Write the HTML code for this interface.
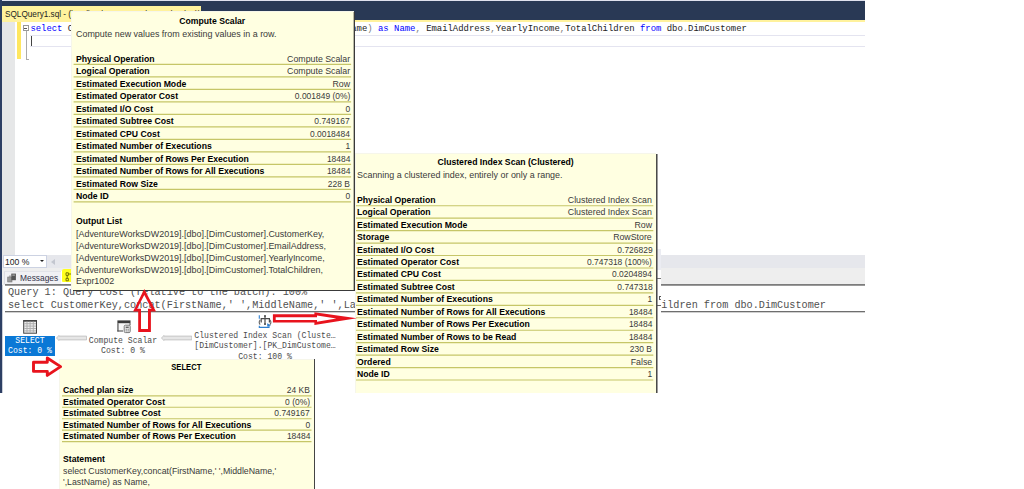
<!DOCTYPE html><html lang="en"><head><meta charset="utf-8"><title>Execution plan</title><style>
html,body{margin:0;padding:0;background:#fff;}
body{width:1024px;height:489px;position:relative;overflow:hidden;font-family:"Liberation Sans",sans-serif;color:#1e1e1e;}
.a{position:absolute;white-space:nowrap;}
.tt{position:absolute;background:#ffffe1;box-shadow:inset 1px 1px 0 #f6f6ea;}
.b{font-weight:bold;color:#000;}
.b{transform:scaleX(0.912);}
.v{transform:scaleX(0.89);color:#3a3a3a;}
.r{transform:scaleX(0.94);}
.r3{transform:scaleX(0.922);}
.ol{transform-origin:0 50%;}
.or{transform-origin:100% 50%;}
.oc{transform-origin:50% 50%;}
.r{color:#3a3a3a;}
.row{position:absolute;white-space:nowrap;line-height:12px;height:12px;}
.sep{position:absolute;height:1.3px;background:#c9c96e;}
.mono{font-family:"Liberation Mono",monospace;}
</style></head><body>
<div class="a" style="left:0;top:0;width:865px;height:20.4px;background:#293955"></div>
<div class="a" style="left:0;top:0;width:865px;height:1px;background:#dfe1ee"></div>
<div class="a" style="left:2px;top:20.4px;width:863px;height:1.6px;background:#fff29d"></div>
<div class="a" style="left:0;top:0;width:2px;height:392.7px;background:#2d3f64"></div>
<div class="a" style="left:2px;top:21px;width:1px;height:371.7px;background:#2d3f64;opacity:0.25"></div>
<div class="a" style="left:2px;top:6px;width:199px;height:15.5px;background:#fff29d"></div>
<div class="a" style="left:5px;top:7.3px;font-size:9.4px;line-height:14px;color:#222;transform:scaleX(0.875);transform-origin:0 0">SQLQuery1.sql - (local).AdventureWorksDW (sa (53))</div>
<div class="a" style="left:2px;top:21.5px;width:13px;height:233px;background:#e6e7e8"></div>
<div class="a" style="left:17px;top:22px;width:3.5px;height:37px;background:#ffe760"></div>
<div class="a mono" style="left:30.4px;top:23.2px;font-size:8.92px;line-height:12px;color:#222"><span style="color:#0000ff">select</span> CustomerKey<span style="color:#808080">,</span><span style="color:#e020e0">concat</span><span style="color:#808080">(</span>FirstName<span style="color:#808080">,</span><span style="color:#e01010">' '</span><span style="color:#808080">,</span>MiddleName<span style="color:#808080">,</span><span style="color:#e01010">' '</span><span style="color:#808080">,</span>LastName<span style="color:#808080">)</span> <span style="color:#0000ff">as</span> <span style="color:#0000ff">Name</span><span style="color:#808080">,</span> EmailAddress<span style="color:#808080">,</span>YearlyIncome<span style="color:#808080">,</span>TotalChildren <span style="color:#0000ff">from</span> dbo<span style="color:#808080">.</span>DimCustomer</div>
<div class="a" style="left:30px;top:34.6px;width:835px;height:12.3px;border-top:1px solid #e4e4f0;border-bottom:1px solid #e4e4f0;box-sizing:border-box"></div>
<div class="a" style="left:30.5px;top:35.5px;width:1.2px;height:10.5px;background:#444"></div>
<div class="a" style="left:22.8px;top:25.2px;width:6px;height:6px;border:1px solid #999;box-sizing:border-box;background:#fff"></div>
<div class="a" style="left:24.3px;top:27.8px;width:3px;height:1px;background:#555"></div>
<div class="a" style="left:25.8px;top:31px;width:1px;height:28px;background:#aaa"></div>
<div class="a" style="left:25.8px;top:58.5px;width:3px;height:1px;background:#aaa"></div>
<div class="a" style="left:2px;top:255px;width:863px;height:13px;background:#e6e7ec"></div>
<div class="a" style="left:2px;top:268px;width:863px;height:16.5px;background:#eeeeee"></div>
<div class="a" style="left:2.5px;top:255.4px;width:44.2px;height:12.2px;background:#fff;border:1px solid #ccd2e2;box-sizing:border-box"></div>
<div class="a" style="left:5px;top:255.8px;font-size:9.6px;line-height:12px;color:#222;transform:scaleX(0.9);transform-origin:0 50%">100 %</div>
<div class="a" style="left:40.3px;top:260.3px;width:0;height:0;border-left:2.2px solid transparent;border-right:2.2px solid transparent;border-top:2.8px solid #222"></div>
<div class="a" style="left:51px;top:258.5px;width:0;height:0;border-top:3px solid transparent;border-bottom:3px solid transparent;border-right:4px solid #c3c6cf"></div>
<div class="a" style="left:4px;top:271.3px;width:56.5px;height:13px;background:#f1f1f4;border-left:1px solid #dcdde3;border-top:1px solid #e2e3e8;box-sizing:border-box"></div>
<div class="a" style="left:60.5px;top:271.3px;width:20px;height:13px;background:#fff"></div>
<div class="a" style="left:20.3px;top:272.3px;font-size:9px;line-height:12px;color:#33334a;transform:scaleX(0.93);transform-origin:0 50%">Messages</div>
<svg class="a" style="left:7px;top:272px" width="10" height="11" viewBox="0 0 10 11"><rect x="0.7" y="5" width="4.3" height="5" fill="#9a9a9a" stroke="#777" stroke-width="0.6"/><rect x="4.3" y="1.6" width="4.6" height="6.6" fill="#555"/><rect x="5.3" y="2.6" width="2.6" height="1" fill="#bbb"/><rect x="2" y="3.6" width="2" height="1.2" fill="#999"/></svg>
<div class="a" style="left:62.2px;top:269px;width:10px;height:13.4px;background:#ffff1e;border-radius:2px 0 0 1px"></div>
<svg class="a" style="left:64px;top:271px" width="9" height="12" viewBox="0 0 9 12"><path d="M2 1.8h2.4v2.6h-2.4zM3.2 4.4v3M2 7.4h2.4v2.4h-2.4zM4.4 3h2.6" fill="none" stroke="#6b6b00" stroke-width="0.9"/></svg>
<div class="a" style="left:5px;top:284px;width:860px;height:1px;background:#7c7c7c"></div>
<div class="a" style="left:5px;top:285px;width:860px;height:1px;background:#9a9a9a"></div>
<div class="a" style="left:5px;top:311px;width:860px;height:1px;background:#6e6e6e"></div>
<div class="a" style="left:5px;top:312px;width:860px;height:1px;background:#d0d0d0"></div>
<div class="a mono" style="left:8px;top:286.8px;font-size:10.18px;line-height:12px;color:#505050">Query 1: Query cost (relative to the batch): 100%</div>
<div class="a mono" style="left:8px;top:300px;font-size:10.18px;line-height:12px;color:#505050">select CustomerKey,concat(FirstName,' ',MiddleName,' ',LastName) as Name, EmailAddress,YearlyIncome,TotalChildren from dbo.DimCustomer</div>
<div class="a" style="left:5px;top:336px;width:50px;height:19.8px;background:#0a78d6"></div>
<div class="a mono" style="left:-70.0px;top:336.0px;width:200px;text-align:center;font-size:8.15px;line-height:10px;color:#fff">SELECT</div>
<div class="a mono" style="left:-70.0px;top:346.0px;width:200px;text-align:center;font-size:8.15px;line-height:10px;color:#fff">Cost: 0 %</div>
<div class="a mono" style="left:23.0px;top:336.0px;width:200px;text-align:center;font-size:8.15px;line-height:10px;color:#4c4c4c">Compute Scalar</div>
<div class="a mono" style="left:23.0px;top:346.0px;width:200px;text-align:center;font-size:8.15px;line-height:10px;color:#4c4c4c">Cost: 0 %</div>
<div class="a mono" style="left:165.0px;top:330.7px;width:200px;text-align:center;font-size:8.15px;line-height:10px;color:#4c4c4c">Clustered Index Scan (Cluste…</div>
<div class="a mono" style="left:165.0px;top:340.7px;width:200px;text-align:center;font-size:8.15px;line-height:10px;color:#4c4c4c">[DimCustomer].[PK_DimCustome…</div>
<div class="a mono" style="left:165.0px;top:351.6px;width:200px;text-align:center;font-size:8.15px;line-height:10px;color:#4c4c4c">Cost: 100 %</div>
<svg class="a" style="left:55.8px;top:333.7px" width="31.0" height="8" viewBox="0 0 31.0 8"><path d="M0.4 4 L3 1.5 L3 2.1 L30.5 2.1 L30.5 5.9 L3 5.9 L3 6.5 Z" fill="#e6e6e6" stroke="#bdbdbd" stroke-width="0.8" stroke-linejoin="round"/></svg>
<svg class="a" style="left:161.2px;top:333.7px" width="31.3" height="8" viewBox="0 0 31.3 8"><path d="M0.4 4 L3 1.5 L3 2.1 L30.8 2.1 L30.8 5.9 L3 5.9 L3 6.5 Z" fill="#e6e6e6" stroke="#bdbdbd" stroke-width="0.8" stroke-linejoin="round"/></svg>
<svg class="a" style="left:23px;top:319.5px" width="14" height="14" viewBox="0 0 14 14"><rect x="0.7" y="0.7" width="12.8" height="12.5" fill="#ececec" stroke="#444" stroke-width="1"/><rect x="0.2" y="0.2" width="13.8" height="1.4" fill="#3c3c3c"/><path d="M4 1.6v11M7.1 1.6v11M10.3 1.6v11M1.2 3.7h11.8M1.2 6.1h11.8M1.2 8.5h11.8M1.2 10.9h11.8" stroke="#aaa" stroke-width="0.9" fill="none"/></svg>
<svg class="a" style="left:116.5px;top:319.5px" width="14" height="14" viewBox="0 0 14 14"><rect x="0.4" y="0.4" width="13.1" height="11" fill="#f6f6f6"/><rect x="0.4" y="0.4" width="13.1" height="2.8" fill="#3a3a3a"/><rect x="0.4" y="3.2" width="1.1" height="8.3" fill="#444"/><rect x="0.4" y="10.5" width="5.6" height="1" fill="#444"/><rect x="12.5" y="3.2" width="1" height="2" fill="#444"/><rect x="7.2" y="5.2" width="6" height="7.4" rx="1.2" fill="#e4e4e4" stroke="#7a7a7a" stroke-width="1"/><rect x="8.7" y="6.6" width="3" height="1.4" fill="#666"/><path d="M8.7 9.3h1.2M10.6 9.3h1.2M8.7 10.9h1.2M10.6 10.9h1.2" stroke="#888" stroke-width="1" fill="none"/></svg>
<svg class="a" style="left:258px;top:315px" width="14" height="14" viewBox="0 0 14 14"><path d="M1.3 0.2v3.6" stroke="#2e7fd0" stroke-width="1.1" fill="none"/><path d="M1.3 10.8v1.6H11V10.5" stroke="#2e7fd0" stroke-width="1.1" fill="none"/><path d="M9.2 8.3l3.8 1.9-3.8 1.6z" fill="#2e7fd0"/><path d="M7 0.4v9.2M3.2 7.6V3.6h8.2v4" stroke="#4a4a4a" stroke-width="1.2" fill="none"/><rect x="6.2" y="0.2" width="1.6" height="1.6" fill="#444"/><rect x="6.2" y="8.3" width="1.6" height="1.6" fill="#444"/><path d="M2.2 4.8Q0.2 7.2 2.2 9.6M11.9 4.8Q13.9 7.2 11.9 9.6" stroke="#666" stroke-width="1.1" fill="none"/></svg>
<div class="a" style="left:657px;top:249px;width:4.2px;height:64px;background:#fff"></div>
<div class="a" style="left:657px;top:249px;width:4.2px;height:21px;background:#ebecf2"></div>
<div class="a" style="left:657px;top:278px;width:4px;height:1px;background:#777"></div>
<div class="a" style="left:658.6px;top:296.4px;width:2px;height:4px;border-top:1px solid #555;border-bottom:1px solid #777;box-sizing:border-box"></div>
<div class="a" style="left:659px;top:296.4px;width:1px;height:4px;background:#555"></div>
<div class="a" style="left:657px;top:304.5px;width:4px;height:1px;background:#666"></div>
<div class="a" style="left:656px;top:153.5px;width:1px;height:239.3px;background:#4a4a4a"></div>
<div class="a" style="left:657px;top:154px;width:1px;height:238.8px;background:#4a4a4a;opacity:0.55"></div>
<div class="tt" style="left:355.0px;top:152.6px;width:301.2px;height:240.2px;font-size:9.50px">
<div class="row b oc" style="left:0;width:301.2px;text-align:center;top:3.4px">Clustered Index Scan (Clustered)</div>
<div class="row r ol" style="left:2.2px;top:16.1px">Scanning a clustered index, entirely or only a range.</div>
<div class="row b ol" style="left:2.2px;top:41.2px">Physical Operation</div>
<div class="row v or" style="right:4.0px;top:41.2px;transform:scaleX(0.925)">Clustered Index Scan</div>
<div class="row b ol" style="left:2.2px;top:53.7px">Logical Operation</div>
<div class="row v or" style="right:4.0px;top:53.7px;transform:scaleX(0.925)">Clustered Index Scan</div>
<div class="row b ol" style="left:2.2px;top:66.1px">Estimated Execution Mode</div>
<div class="row v or" style="right:4.0px;top:66.1px;transform:scaleX(0.925)">Row</div>
<div class="row b ol" style="left:2.2px;top:78.6px">Storage</div>
<div class="row v or" style="right:4.0px;top:78.6px;transform:scaleX(0.925)">RowStore</div>
<div class="row b ol" style="left:2.2px;top:91.0px">Estimated I/O Cost</div>
<div class="row v or" style="right:4.0px;top:91.0px">0.726829</div>
<div class="row b ol" style="left:2.2px;top:103.5px">Estimated Operator Cost</div>
<div class="row v or" style="right:4.0px;top:103.5px">0.747318 (100%)</div>
<div class="row b ol" style="left:2.2px;top:115.9px">Estimated CPU Cost</div>
<div class="row v or" style="right:4.0px;top:115.9px">0.0204894</div>
<div class="row b ol" style="left:2.2px;top:128.3px">Estimated Subtree Cost</div>
<div class="row v or" style="right:4.0px;top:128.3px">0.747318</div>
<div class="row b ol" style="left:2.2px;top:140.8px">Estimated Number of Executions</div>
<div class="row v or" style="right:4.0px;top:140.8px">1</div>
<div class="row b ol" style="left:2.2px;top:153.3px">Estimated Number of Rows for All Executions</div>
<div class="row v or" style="right:4.0px;top:153.3px">18484</div>
<div class="row b ol" style="left:2.2px;top:165.7px">Estimated Number of Rows Per Execution</div>
<div class="row v or" style="right:4.0px;top:165.7px">18484</div>
<div class="row b ol" style="left:2.2px;top:178.2px">Estimated Number of Rows to be Read</div>
<div class="row v or" style="right:4.0px;top:178.2px">18484</div>
<div class="row b ol" style="left:2.2px;top:190.6px">Estimated Row Size</div>
<div class="row v or" style="right:4.0px;top:190.6px">230 B</div>
<div class="row b ol" style="left:2.2px;top:203.0px">Ordered</div>
<div class="row v or" style="right:4.0px;top:203.0px;transform:scaleX(0.925)">False</div>
<div class="row b ol" style="left:2.2px;top:215.5px">Node ID</div>
<div class="row v or" style="right:4.0px;top:215.5px">1</div>
<svg class="a" style="left:0;top:0" width="301.2" height="240.2"><path d="M1.0 52.70H298.3M1.0 65.15H298.3M1.0 77.60H298.3M1.0 90.05H298.3M1.0 102.50H298.3M1.0 114.95H298.3M1.0 127.40H298.3M1.0 139.85H298.3M1.0 152.30H298.3M1.0 164.75H298.3M1.0 177.20H298.3M1.0 189.65H298.3M1.0 202.10H298.3M1.0 214.55H298.3M1.0 227.00H298.3" stroke="#c6c668" stroke-width="1.15" fill="none"/></svg>
</div>
<div class="a" style="left:353.9px;top:12px;width:1.2px;height:278.7px;background:#3a3a3a"></div>
<div class="a" style="left:73px;top:289.7px;width:282px;height:1px;background:#3a3a3a"></div>
<div class="tt" style="left:71.4px;top:11.0px;width:282.5px;height:278.7px;font-size:9.50px">
<div class="row b oc" style="left:0;width:282.5px;text-align:center;top:4.0px">Compute Scalar</div>
<div class="row r ol" style="left:4.3px;top:17.0px">Compute new values from existing values in a row.</div>
<div class="row b ol" style="left:4.3px;top:41.5px">Physical Operation</div>
<div class="row v or" style="right:3.9px;top:41.5px;transform:scaleX(0.925)">Compute Scalar</div>
<div class="row b ol" style="left:4.3px;top:54.0px">Logical Operation</div>
<div class="row v or" style="right:3.9px;top:54.0px;transform:scaleX(0.925)">Compute Scalar</div>
<div class="row b ol" style="left:4.3px;top:66.5px">Estimated Execution Mode</div>
<div class="row v or" style="right:3.9px;top:66.5px;transform:scaleX(0.925)">Row</div>
<div class="row b ol" style="left:4.3px;top:79.0px">Estimated Operator Cost</div>
<div class="row v or" style="right:3.9px;top:79.0px">0.001849 (0%)</div>
<div class="row b ol" style="left:4.3px;top:91.5px">Estimated I/O Cost</div>
<div class="row v or" style="right:3.9px;top:91.5px">0</div>
<div class="row b ol" style="left:4.3px;top:104.0px">Estimated Subtree Cost</div>
<div class="row v or" style="right:3.9px;top:104.0px">0.749167</div>
<div class="row b ol" style="left:4.3px;top:116.5px">Estimated CPU Cost</div>
<div class="row v or" style="right:3.9px;top:116.5px">0.0018484</div>
<div class="row b ol" style="left:4.3px;top:129.0px">Estimated Number of Executions</div>
<div class="row v or" style="right:3.9px;top:129.0px">1</div>
<div class="row b ol" style="left:4.3px;top:141.5px">Estimated Number of Rows Per Execution</div>
<div class="row v or" style="right:3.9px;top:141.5px">18484</div>
<div class="row b ol" style="left:4.3px;top:154.0px">Estimated Number of Rows for All Executions</div>
<div class="row v or" style="right:3.9px;top:154.0px">18484</div>
<div class="row b ol" style="left:4.3px;top:166.5px">Estimated Row Size</div>
<div class="row v or" style="right:3.9px;top:166.5px">228 B</div>
<div class="row b ol" style="left:4.3px;top:179.0px">Node ID</div>
<div class="row v or" style="right:3.9px;top:179.0px">0</div>
<svg class="a" style="left:0;top:0" width="282.5" height="278.7"><path d="M2.6 53.40H280.1M2.6 65.90H280.1M2.6 78.40H280.1M2.6 90.90H280.1M2.6 103.40H280.1M2.6 115.90H280.1M2.6 128.40H280.1M2.6 140.90H280.1M2.6 153.40H280.1M2.6 165.90H280.1M2.6 178.40H280.1M2.6 190.90H280.1" stroke="#c6c668" stroke-width="1.15" fill="none"/></svg>
<div class="row b ol" style="left:4.3px;top:204.0px">Output List</div>
<div class="row r ol" style="left:4.3px;top:216.7px">[AdventureWorksDW2019].[dbo].[DimCustomer].CustomerKey,</div>
<div class="row r ol" style="left:4.3px;top:228.7px">[AdventureWorksDW2019].[dbo].[DimCustomer].EmailAddress,</div>
<div class="row r ol" style="left:4.3px;top:240.7px">[AdventureWorksDW2019].[dbo].[DimCustomer].YearlyIncome,</div>
<div class="row r ol" style="left:4.3px;top:252.7px">[AdventureWorksDW2019].[dbo].[DimCustomer].TotalChildren,</div>
<div class="row r ol" style="left:4.3px;top:264.3px">Expr1002</div>
</div>
<div class="a" style="left:353px;top:12px;width:1px;height:278px;background:#3a3a3a;opacity:0.35"></div>
<div class="a" style="left:313.7px;top:359px;width:1.4px;height:131px;background:#444"></div>
<div class="tt" style="left:59.2px;top:358.5px;width:254.6px;height:131.5px;font-size:9.50px">
<div class="row b oc" style="left:0;width:254.6px;text-align:center;top:2.5px;transform:scaleX(0.800)">SELECT</div>
<div class="row b ol" style="left:4.1px;top:25.7px">Cached plan size</div>
<div class="row v or" style="right:3.8px;top:25.7px">24 KB</div>
<div class="row b ol" style="left:4.1px;top:37.1px">Estimated Operator Cost</div>
<div class="row v or" style="right:3.8px;top:37.1px">0 (0%)</div>
<div class="row b ol" style="left:4.1px;top:48.6px">Estimated Subtree Cost</div>
<div class="row v or" style="right:3.8px;top:48.6px">0.749167</div>
<div class="row b ol" style="left:4.1px;top:60.0px">Estimated Number of Rows for All Executions</div>
<div class="row v or" style="right:3.8px;top:60.0px">0</div>
<div class="row b ol" style="left:4.1px;top:71.5px">Estimated Number of Rows Per Execution</div>
<div class="row v or" style="right:3.8px;top:71.5px">18484</div>
<svg class="a" style="left:0;top:0" width="254.6" height="131.5"><path d="M3.0 36.80H252.5M3.0 48.25H252.5M3.0 59.70H252.5M3.0 71.15H252.5M3.0 82.60H252.5" stroke="#c6c668" stroke-width="1.15" fill="none"/></svg>
<div class="row b ol" style="left:4.1px;top:94.9px">Statement</div>
<div class="row r r3 ol" style="left:4.1px;top:106.3px">select CustomerKey,concat(FirstName,' ',MiddleName,'</div>
<div class="row r r3 ol" style="left:4.1px;top:117.3px">',LastName) as Name,</div>
</div>
<svg class="a" style="left:0;top:0" width="1024" height="489" viewBox="0 0 1024 489"><path fill="#e8131d" fill-rule="evenodd" d="M144.3 289.1 L156 311.4 L150.9 311.4 L150.9 332 L138.2 332 L138.2 311.4 L133.1 311.4 Z M144.3 295 L151.5 308.7 L148 308.7 L148 329 L141 329 L141 308.7 L137.1 308.7 Z"/><path fill="#e8131d" fill-rule="evenodd" d="M272.9 314.3 L314.4 314.3 L314.4 312.3 L356.9 318.2 L314.4 325 L314.4 322.6 L272.9 322.6 Z M275.7 317.2 L317 317.2 L317 315.6 L336.4 318.4 L317 321.7 L317 320.1 L275.7 320.1 Z"/><path fill="none" stroke="#e8131d" stroke-width="2.9" stroke-linejoin="round" d="M33.5 362.3 L47.3 362.3 L47.3 358 L60.6 366.6 L47.3 375.4 L47.3 371.4 L33.5 371.4 Z"/></svg>
</body></html>
